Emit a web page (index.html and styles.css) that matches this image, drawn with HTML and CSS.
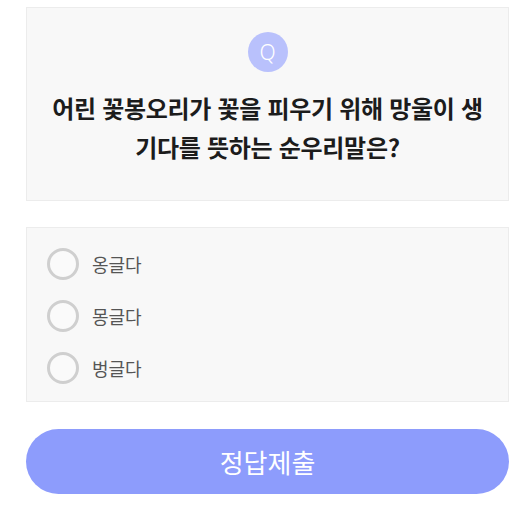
FILE: index.html
```html
<!DOCTYPE html>
<html lang="ko">
<head>
<meta charset="UTF-8" />
<meta name="viewport" content="width=device-width, initial-scale=1" />
<title>퀴즈</title>
<link rel="stylesheet" href="styles.css">
</head>
<body>
<div class="quiz">
  <div class="question-box">
    <div class="q-badge">Q</div>
    <p class="question">어린 꽃봉오리가 꽃을 피우기 위해 망울이 생기다를 뜻하는 순우리말은?</p>
  </div>

  <ul class="options">
    <li class="option"><span class="radio"></span><span class="label">옹글다</span></li>
    <li class="option"><span class="radio"></span><span class="label">몽글다</span></li>
    <li class="option"><span class="radio"></span><span class="label">벙글다</span></li>
  </ul>

  <button class="submit-btn">정답제출</button>
</div>
</body>
</html>
```

FILE: styles.css
```css
body {
  margin: 0;
  padding: 7px 20px 0 26px;
  background: #fff;
  font-family: "Noto Sans CJK KR", "Noto Sans", sans-serif;
  color: #222;
}
.quiz {
  display: flex;
  flex-direction: column;
}
.question-box {
  background: #f8f8f8;
  border: 1px solid #ececec;
  padding: 24px 0 34px;
  display: flex;
  flex-direction: column;
  align-items: center;
}
.q-badge {
  width: 40px; height: 40px;
  border-radius: 50%;
  background: #b9c1fc;
  color: #fff;
  font-size: 21px;
  line-height: 40px;
  text-align: center;
  font-family: "Noto Sans", sans-serif;
  font-weight: 300;
}
.question {
  margin: 16px 0 0;
  padding: 0 20px;
  font-size: 24px;
  font-weight: bold;
  line-height: 39px;
  text-align: center;
  color: #1c1c1c;
  letter-spacing: -0.3px;
}
.options {
  list-style: none;
  margin: 26px 0 0;
  padding: 10px 20px 7px;
  background: #f8f8f8;
  border: 1px solid #ececec;
}
.option {
  height: 52px;
  display: flex;
  align-items: center;
  gap: 13px;
}
.radio {
  box-sizing: border-box;
  width: 32px; height: 32px;
  border: 3px solid #cfcfcf;
  border-radius: 50%;
  background: #fafafa;
}
.label {
  font-size: 18px;
  color: #555;
}
.submit-btn {
  margin-top: 27px;
  height: 65px;
  border: none;
  border-radius: 33px;
  background: #8d9cfc;
  color: #fff;
  font-family: "Noto Sans CJK KR", "Noto Sans", sans-serif;
  font-size: 26px;
  cursor: pointer;
}
```
